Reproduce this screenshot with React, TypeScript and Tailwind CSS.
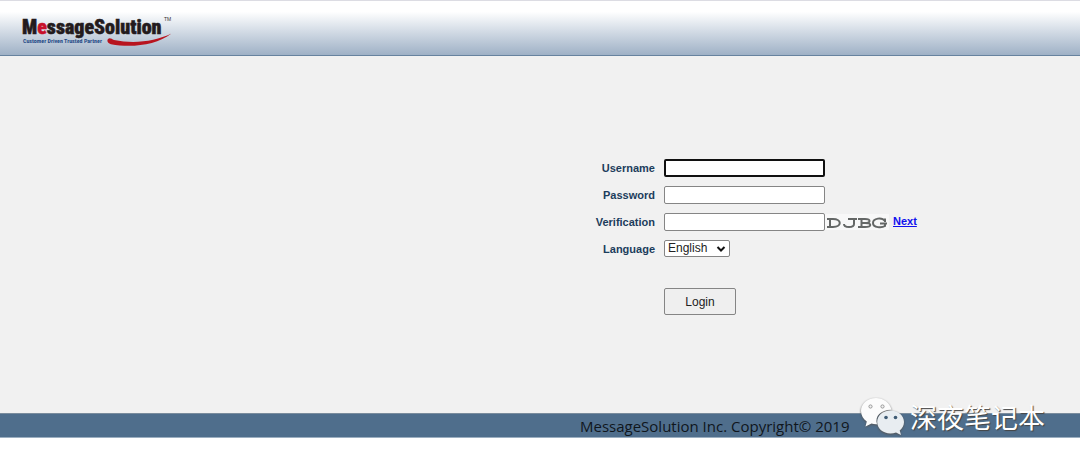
import { useState } from "react";
import type { ReactNode } from "react";

function Logo() {
  return (
    <svg
      className="h-9 w-40 shrink-0"
      viewBox="0 0 160 36"
      role="img"
      aria-label="MessageSolution"
    >
      <text
        x="0"
        y="22"
        fill="#231b1d"
        stroke="#231b1d"
        strokeWidth="0.5"
        className="font-['Roboto_Condensed','Roboto',sans-serif] text-[20px] font-black"
      >
        M
        <tspan fill="#c8102a" stroke="#c8102a">
          e
        </tspan>
        ssageSolution
      </text>
      <text
        x="142"
        y="9"
        fill="#333"
        className="font-['Liberation_Sans',sans-serif] text-[5px]"
      >
        TM
      </text>
      <text
        x="1"
        y="31"
        fill="#1f4a86"
        className="font-['Roboto_Condensed','Roboto',sans-serif] text-[6px] font-bold"
      >
        Customer Driven Trusted Partner
      </text>
      <path
        d="M86 27C84.500 29 86 31.500 89 32.200C109 36 134 33.500 149.500 21.500C133 29.500 112 32 92 28C89.500 26.500 87.500 25.300 86 27Z"
        fill="#b8141f"
      />
    </svg>
  );
}

function Captcha() {
  return (
    <svg className="h-4 w-16" viewBox="0 0 64 16" role="img" aria-label="Verification code">
      <rect width="64" height="16" fill="#f8f8f8" />
      <g fill="none" stroke="#646766" strokeWidth="2">
        <path d="M2 5H8C17 5 17 13 8 13H2M5 5V13" />
        <path d="M23 5H32M29 5V10C29 14 19 14 19 10" />
        <path d="M33 5H40C46 5 46 9 40 9H36M40 9C47 9 47 13 40 13H33M36.500 5V13" />
        <path d="M60 8V4.500M60 7C57 3 48 4 48 9C48 14 57 14 60 12V9.500M55 9.500H62" />
      </g>
    </svg>
  );
}

function WeChatIcon() {
  return (
    <svg className="h-10 w-11 shrink-0 drop-shadow-[0_1px_1px_#555]" viewBox="0 0 44 40" aria-hidden="true">
      <path
        d="M16 1C7.500 1 1 6.800 1 14C1 18.300 3.300 22 6.800 24.500L5.500 29.500L11.500 26.500C13 27 15 27.300 17 27.200C14.500 19 21 12.500 31.500 12.700C30 5.800 23.500 1 16 1Z"
        fill="#fcfcfc"
      />
      <path
        d="M30.500 13.500C23 13.500 17.200 18.500 17.200 25C17.200 31.500 23 36.500 30.500 36.500C32.500 36.500 34.300 36.200 36 35.500L41 38L39.700 33.500C42.300 31.500 44 28.500 44 25C44 18.500 38 13.500 30.500 13.500Z"
        fill="#e8edf1"
      />
      <g fill="#f2f2f2" stroke="#999" strokeWidth="1">
        <circle cx="10.500" cy="9.500" r="1.600" />
        <circle cx="22.500" cy="9.500" r="1.600" />
      </g>
      <g fill="#3f5b74">
        <circle cx="26" cy="20.500" r="1.800" />
        <circle cx="35.500" cy="20.500" r="1.800" />
      </g>
    </svg>
  );
}

function Field({ id, label, children }: { id: string; label: string; children: ReactNode }) {
  return (
    <div className="flex items-center gap-[9px]">
      <label
        htmlFor={id}
        className="w-[115px] shrink-0 text-right text-[11px] leading-4 font-bold text-[#1c3d5c]"
      >
        {label}
      </label>
      <div className="flex items-center">{children}</div>
    </div>
  );
}

const inputClass =
  "h-[18px] w-[161px] rounded-xs border border-[#858585] bg-white px-1 text-xs outline-none focus:border-2 focus:border-[#101010]";

export default function App() {
  const [language, setLanguage] = useState("English");
  return (
    <div className="relative bg-white font-['Liberation_Sans',Arial,sans-serif] text-xs text-black">
      <header className="flex h-14 items-center border-t border-b border-t-[#dcdce3] border-b-[#67839f] bg-linear-to-b from-white from-20% to-[#9fb1c6] px-[22px] pt-1">
        <Logo />
      </header>

      <main className="bg-[#f1f1f1] pt-[103px] pb-[98px]">
        <form className="ml-[50%] flex flex-col gap-[9px]" onSubmit={(e) => e.preventDefault()}>
          <Field id="username" label="Username">
            <input id="username" type="text" autoFocus className={inputClass} />
          </Field>
          <Field id="password" label="Password">
            <input id="password" type="password" className={inputClass} />
          </Field>
          <Field id="verification" label="Verification">
            <input id="verification" type="text" className={inputClass} />
            <Captcha />
            <a
              href="#next"
              className="ml-1 self-start text-[11px] leading-4 font-bold text-[#1010ee] underline"
            >
              Next
            </a>
          </Field>
          <Field id="language" label="Language">
            <div className="relative">
              <select
                id="language"
                value={language}
                onChange={(e) => setLanguage(e.target.value)}
                className="block h-[17px] w-[66px] appearance-none rounded-xs border border-[#858585] bg-white pl-[3px] text-xs leading-[15px] text-[#222]"
              >
                <option>English</option>
              </select>
              <svg
                className="pointer-events-none absolute top-1.5 right-1 h-1.5 w-2.5"
                viewBox="0 0 10 6"
                aria-hidden="true"
              >
                <path d="M1.500 1L5 4.500L8.500 1" fill="none" stroke="#111" strokeWidth="2" />
              </svg>
            </div>
          </Field>
          <button
            type="submit"
            className="mt-[22px] ml-[124px] h-[27px] w-[72px] rounded-xs border border-[#858585] bg-[#efefef] text-xs text-[#222]"
          >
            Login
          </button>
        </form>
      </main>

      <footer className="flex h-[25px] items-center border-t border-b border-t-[#7a8c9d] border-b-[#9cafc1] bg-[#4f6e8c]">
        <p className="ml-[50%] pl-10 font-['Open_Sans','Noto_Sans',sans-serif] text-[15px] leading-5 text-[#10161c]">
          MessageSolution Inc. Copyright© 2019
        </p>
      </footer>

      <div className="pointer-events-none absolute right-[35px] bottom-px flex items-center gap-1.5 text-white">
        <WeChatIcon />
        <span className="font-['Noto_Sans_CJK_SC',sans-serif] text-[27px] leading-10 text-shadow-[1px_1px_1px_#444]">
          深夜笔记本
        </span>
      </div>
    </div>
  );
}
